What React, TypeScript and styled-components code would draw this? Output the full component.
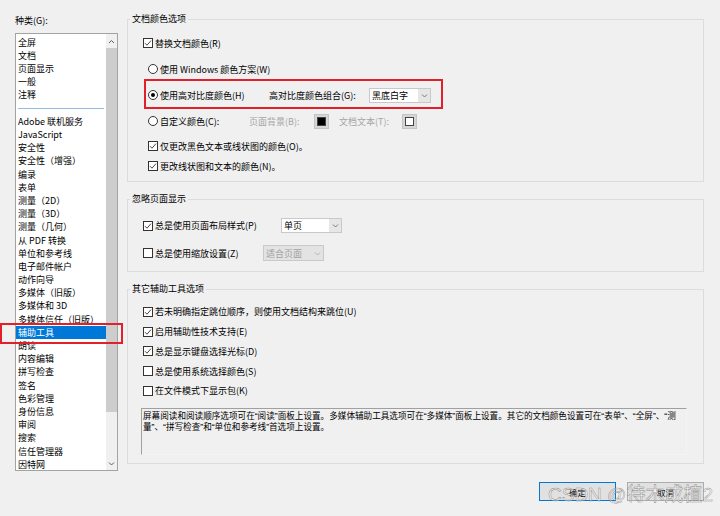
import React from "react";
import styled, { createGlobalStyle } from "styled-components";

const GlobalStyle = createGlobalStyle`
  html, body {
    margin: 0;
    padding: 0;
    background: #f0f0f0;
  }
  body {
    font-family: "Noto Sans CJK SC", "Liberation Sans", sans-serif;
    font-size: 9px;
    color: #000;
  }
`;

const categories = [
  "全屏",
  "文档",
  "页面显示",
  "一般",
  "注释",
  "-",
  "Adobe 联机服务",
  "JavaScript",
  "安全性",
  "安全性（增强）",
  "编录",
  "表单",
  "测量（2D）",
  "测量（3D）",
  "测量（几何）",
  "从 PDF 转换",
  "单位和参考线",
  "电子邮件帐户",
  "动作向导",
  "多媒体（旧版）",
  "多媒体和 3D",
  "多媒体信任（旧版）",
  "辅助工具",
  "朗读",
  "内容编辑",
  "拼写检查",
  "签名",
  "色彩管理",
  "身份信息",
  "审阅",
  "搜索",
  "信任管理器",
  "因特网",
];

const Window = styled.div`
  position: relative;
  width: 720px;
  height: 516px;
  display: flex;
  flex-direction: column;
  overflow: hidden;
`;

const Main = styled.div`
  display: grid;
  grid-template-columns: 103px 577px;
  column-gap: 9px;
  padding-left: 15px;
  align-items: start;
`;

const Sidebar = styled.div`
  padding-top: 14px;
  display: flex;
  flex-direction: column;
`;

const SideLabel = styled.div`
  line-height: 13px;
  height: 13px;
  margin-bottom: 6px;
`;

const ListBox = styled.div`
  height: 438px;
  box-sizing: border-box;
  border: 1px solid #a3a3a3;
  background: #fff;
  display: grid;
  grid-template-columns: 1fr 11px;
  overflow: hidden;
`;

const Items = styled.div`
  padding-top: 1.7px;
  overflow: hidden;
`;

const Item = styled.div<{ $selected?: boolean }>`
  height: 13.2px;
  line-height: 13.2px;
  padding-left: 2px;
  white-space: nowrap;
  background: ${(p) => (p.$selected ? "#0078d7" : "transparent")};
  color: ${(p) => (p.$selected ? "#fff" : "#000")};
`;

const Separator = styled.div`
  height: 13.2px;
  display: flex;
  align-items: center;
  padding: 0 2px;
  &::after {
    content: "";
    flex: 1;
    height: 1px;
    background: #93bde0;
  }
`;

const ScrollBar = styled.div`
  background: #f0f0f0;
  display: flex;
  flex-direction: column;
`;

const ScrollButton = styled.div`
  height: 14px;
  display: flex;
  align-items: center;
  justify-content: center;
  flex: none;
`;

const Thumb = styled.div`
  height: 364px;
  background: #cdcdcd;
  flex: none;
`;

const Spacer = styled.div`
  flex: 1;
`;

const Content = styled.div`
  padding-top: 13px;
  display: flex;
  flex-direction: column;
  gap: 11px;
`;

const Group = styled.fieldset`
  margin: 0;
  padding: 0;
  min-width: 0;
  border: 1px solid #dcdcdc;
`;

const Legend = styled.legend`
  margin-left: 2px;
  padding: 0 2px;
  line-height: 12px;
  font-size: 9px;
`;

const Body = styled.div<{ $pt: number; $pb: number }>`
  padding: ${(p) => p.$pt}px 16px ${(p) => p.$pb}px 15px;
  display: flex;
  flex-direction: column;
`;

const Row = styled.div<{ $h: number; $indent?: boolean; $mt?: number }>`
  position: relative;
  height: ${(p) => p.$h}px;
  margin-top: ${(p) => p.$mt || 0}px;
  padding-left: ${(p) => (p.$indent ? 5 : 0)}px;
  display: flex;
  align-items: center;
  white-space: nowrap;
`;

const Option = styled.label<{ $w?: number }>`
  display: flex;
  align-items: center;
  gap: 2px;
  flex: none;
  width: ${(p) => (p.$w ? `${p.$w}px` : "auto")};
`;

const Box = styled.span`
  width: 10px;
  height: 10px;
  box-sizing: border-box;
  border: 1px solid #333;
  background: #fff;
  display: inline-flex;
  align-items: center;
  justify-content: center;
  flex: none;
`;

const Ring = styled.span<{ $on?: boolean }>`
  width: 10px;
  height: 10px;
  box-sizing: border-box;
  border: 1px solid #333;
  border-radius: 50%;
  background: #fff;
  display: inline-flex;
  align-items: center;
  justify-content: center;
  flex: none;
  &::after {
    content: "";
    width: 4px;
    height: 4px;
    border-radius: 50%;
    background: ${(p) => (p.$on ? "#000" : "transparent")};
  }
`;

const FieldLabel = styled.span<{ $w: number; $muted?: boolean }>`
  width: ${(p) => p.$w}px;
  flex: none;
  color: ${(p) => (p.$muted ? "#a6a6a6" : "#000")};
`;

const Select = styled.div<{ $w: number; $h: number; $disabled?: boolean }>`
  width: ${(p) => p.$w}px;
  height: ${(p) => p.$h}px;
  box-sizing: border-box;
  border: 1px solid #c9c9c9;
  background: ${(p) => (p.$disabled ? "#e3e3e3" : "#fff")};
  color: ${(p) => (p.$disabled ? "#a0a0a0" : "#000")};
  display: flex;
  align-items: stretch;
  flex: none;
`;

const SelectText = styled.span`
  flex: 1;
  padding-left: 2px;
  display: flex;
  align-items: center;
`;

const SelectArrow = styled.span<{ $disabled?: boolean }>`
  width: 12px;
  background: ${(p) => (p.$disabled ? "#e3e3e3" : "#e6e6e6")};
  display: flex;
  align-items: center;
  justify-content: center;
`;

const Swatch = styled.span<{ $color: string; $mr?: number }>`
  width: 15px;
  height: 15px;
  box-sizing: border-box;
  border: 1px solid #c4c4c4;
  background: #d6d6d6;
  display: flex;
  align-items: center;
  justify-content: center;
  flex: none;
  margin-right: ${(p) => p.$mr || 0}px;
  &::after {
    content: "";
    width: 9px;
    height: 9px;
    box-sizing: border-box;
    border: 1px solid #444;
    background: ${(p) => p.$color};
  }
`;

const Highlight = styled.div`
  position: absolute;
  left: 1px;
  top: -3px;
  width: 299px;
  height: 30px;
  box-sizing: border-box;
  border: 2px solid #e0202b;
  pointer-events: none;
`;

const ListHighlight = styled.div`
  position: absolute;
  left: 0;
  top: 323px;
  width: 123px;
  height: 21px;
  box-sizing: border-box;
  border: 2px solid #e0202b;
`;

/* quotes come from Liberation Sans so they stay narrow, as in the reference */
const Note = styled.div`
  width: 546px;
  height: 47px;
  margin: 7px 0 0 -2px;
  box-sizing: border-box;
  border-style: solid;
  border-width: 1px;
  border-color: #a0a0a0 #f4f4f4 #f4f4f4 #a0a0a0;
  background: #f0f0f0;
  padding: 2px 6px 0 1px;
  font-family: "Liberation Sans", "Noto Sans CJK SC", sans-serif;
  font-size: 8.6px;
  line-height: 11px;
`;

const Footer = styled.div`
  margin-top: 11px;
  padding-right: 16px;
  display: flex;
  justify-content: flex-end;
  gap: 11px;
`;

const Button = styled.button<{ $primary?: boolean }>`
  width: 77px;
  height: 19px;
  box-sizing: border-box;
  border: 1px solid ${(p) => (p.$primary ? "#0078d7" : "#adadad")};
  background: #e1e1e1;
  font-family: inherit;
  font-size: 8.5px;
  padding: 0;
  color: #000;
`;

const Watermark = styled.div`
  position: absolute;
  left: 548px;
  top: 483px;
  font-family: "Liberation Sans", "Noto Sans CJK SC", sans-serif;
  font-size: 19px;
  line-height: 24px;
  white-space: nowrap;
  color: rgba(255, 255, 255, 0.5);
  -webkit-text-stroke: 0.45px rgba(100, 100, 100, 0.75);
  pointer-events: none;
`;

const Chevron: React.FC<{ up?: boolean; color?: string }> = ({ up, color = "#606060" }) => (
  <svg width="7" height="5" viewBox="0 0 7 5">
    <polyline
      points={up ? "1,4 3.5,1.5 6,4" : "1,1.5 3.5,4 6,1.5"}
      fill="none"
      stroke={color}
      strokeWidth="1"
    />
  </svg>
);

const Checkbox: React.FC<{ checked?: boolean; label: string; w?: number }> = ({ checked, label, w }) => (
  <Option $w={w}>
    <Box>
      {checked && (
        <svg width="8" height="8" viewBox="0 0 8 8">
          <polyline points="1,4.2 3,6.2 7,1.6" fill="none" stroke="#333" strokeWidth="0.9" />
        </svg>
      )}
    </Box>
    {label}
  </Option>
);

const Radio: React.FC<{ on?: boolean; label: string; w?: number }> = ({ on, label, w }) => (
  <Option $w={w}>
    <Ring $on={on} />
    {label}
  </Option>
);

const Dropdown: React.FC<{ value: string; w: number; h: number; disabled?: boolean }> = ({
  value,
  w,
  h,
  disabled,
}) => (
  <Select $w={w} $h={h} $disabled={disabled}>
    <SelectText>{value}</SelectText>
    <SelectArrow $disabled={disabled}>
      <Chevron color={disabled ? "#b5b5b5" : "#7a7a7a"} />
    </SelectArrow>
  </Select>
);

const App: React.FC = () => {
  return (
    <>
      <GlobalStyle />
      <Window>
        <Main>
          <Sidebar>
            <SideLabel>种类(G):</SideLabel>
            <ListBox>
              <Items>
                {categories.map((c, i) =>
                  c === "-" ? (
                    <Separator key={i} />
                  ) : (
                    <Item key={i} $selected={c === "辅助工具"}>
                      {c}
                    </Item>
                  )
                )}
              </Items>
              <ScrollBar>
                <ScrollButton>
                  <Chevron up />
                </ScrollButton>
                <Thumb />
                <Spacer />
                <ScrollButton>
                  <Chevron />
                </ScrollButton>
              </ScrollBar>
            </ListBox>
          </Sidebar>

          <Content>
            <Group>
              <Legend>文档颜色选项</Legend>
              <Body $pt={5} $pb={5}>
                <Row $h={26}>
                  <Checkbox checked label="替换文档颜色(R)" />
                </Row>
                <Row $h={26} $indent>
                  <Radio label="使用 Windows 颜色方案(W)" />
                </Row>
                <Row $h={26} $indent>
                  <Radio on label="使用高对比度颜色(H)" w={121} />
                  <FieldLabel $w={100}>高对比度颜色组合(G):</FieldLabel>
                  <Dropdown value="黑底白字" w={62} h={15} />
                  <Highlight />
                </Row>
                <Row $h={26} $indent>
                  <Radio label="自定义颜色(C):" w={101} />
                  <FieldLabel $w={65} $muted>
                    页面背景(B):
                  </FieldLabel>
                  <Swatch $color="#000" $mr={10} />
                  <FieldLabel $w={63} $muted>
                    文档文本(T):
                  </FieldLabel>
                  <Swatch $color="#fff" />
                </Row>
                <Row $h={20} $indent $mt={2}>
                  <Checkbox checked label="仅更改黑色文本或线状图的颜色(O)。" />
                </Row>
                <Row $h={20} $indent>
                  <Checkbox checked label="更改线状图和文本的颜色(N)。" />
                </Row>
              </Body>
            </Group>

            <Group>
              <Legend>忽略页面显示</Legend>
              <Body $pt={7} $pb={4}>
                <Row $h={27}>
                  <Checkbox checked label="总是使用页面布局样式(P)" w={138} />
                  <Dropdown value="单页" w={61} h={15} />
                </Row>
                <Row $h={28}>
                  <Checkbox label="总是使用缩放设置(Z)" w={120} />
                  <Dropdown value="适合页面" w={61} h={16} disabled />
                </Row>
              </Body>
            </Group>

            <Group>
              <Legend>其它辅助工具选项</Legend>
              <Body $pt={7} $pb={8}>
                <Row $h={19.75}>
                  <Checkbox checked label="若未明确指定跳位顺序，则使用文档结构来跳位(U)" />
                </Row>
                <Row $h={19.75}>
                  <Checkbox checked label="启用辅助性技术支持(E)" />
                </Row>
                <Row $h={19.75}>
                  <Checkbox checked label="总是显示键盘选择光标(D)" />
                </Row>
                <Row $h={19.75}>
                  <Checkbox label="总是使用系统选择颜色(S)" />
                </Row>
                <Row $h={19.75}>
                  <Checkbox label="在文件模式下显示包(K)" />
                </Row>
                <Note>
                  屏幕阅读和阅读顺序选项可在“阅读”面板上设置。多媒体辅助工具选项可在“多媒体”面板上设置。其它的文档颜色设置可在“表单”、“全屏”、“测量”、“拼写检查”和“单位和参考线”首选项上设置。
                </Note>
              </Body>
            </Group>
          </Content>
        </Main>

        <Footer>
          <Button $primary>确定</Button>
          <Button>取消</Button>
        </Footer>

        <ListHighlight />
        <Watermark>CSDN @待木成植2</Watermark>
      </Window>
    </>
  );
};

export default App;
